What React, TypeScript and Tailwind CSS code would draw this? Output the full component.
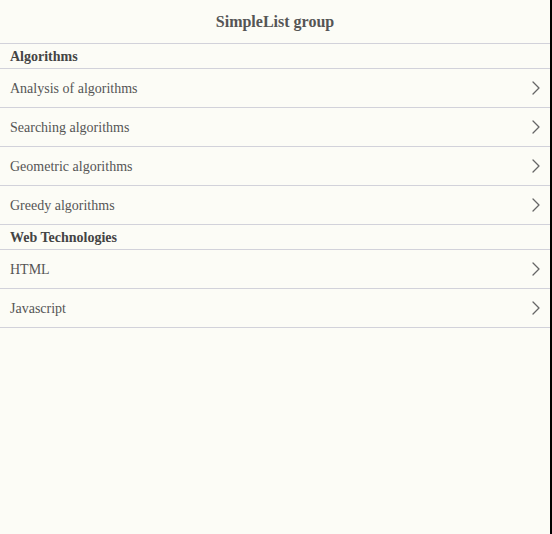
import { ChevronRight } from "lucide-react";

const groups = [
  {
    title: "Algorithms",
    items: ["Analysis of algorithms", "Searching algorithms", "Geometric algorithms", "Greedy algorithms"],
  },
  {
    title: "Web Technologies",
    items: ["HTML", "Javascript"],
  },
];

export default function App() {
  return (
    <div className="flex h-[534px] w-[552px] bg-black">
      <div className="h-full w-[550px] bg-[#fcfcf6] text-[#555555] font-['Liberation_Serif',serif]">
        <div className="flex h-[44px] items-center justify-center border-b border-[#d2d2da]">
          <h1 className="text-[16px] font-bold">SimpleList group</h1>
        </div>
        {groups.map((g) => (
          <div key={g.title}>
            <div className="flex h-[25px] items-center border-b border-[#d2d2da] px-[10px] text-[14px] font-bold text-[#444444]">
              {g.title}
            </div>
            {g.items.map((item) => (
              <div key={item} className="flex h-[39px] items-center justify-between border-b border-[#d2d2da] pl-[10px] pr-[2px] text-[14px]">
                <span>{item}</span>
                <ChevronRight className="h-[24px] w-[24px] text-[#666666]" strokeWidth={1.3} />
              </div>
            ))}
          </div>
        ))}
      </div>
    </div>
  );
}
